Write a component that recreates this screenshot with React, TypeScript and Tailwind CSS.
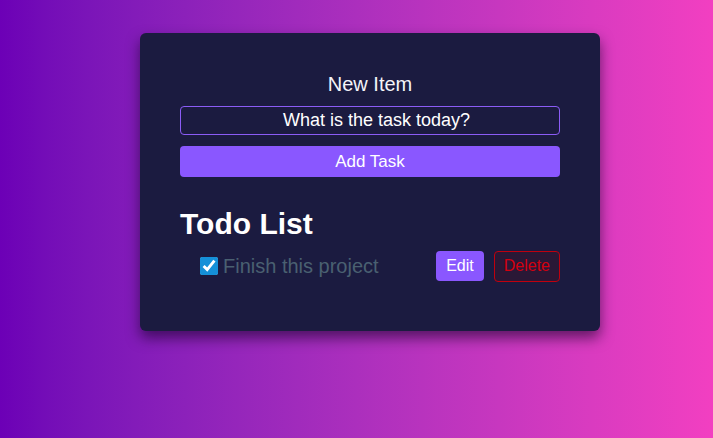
import { useState } from "react";

export default function App() {
  const [task, setTask] = useState("");
  const [done, setDone] = useState(true);

  return (
    <div className="min-h-screen w-full bg-gradient-to-r from-[#6c00b6] to-[#f23fc1] pt-[33px] font-['Liberation_Sans',Arial,sans-serif]">
      <div className="ml-[140px] w-[460px] rounded-md bg-[#1b1b40] px-10 pt-[37px] pb-[50px] shadow-[0_7px_14px_rgba(20,0,40,0.6)]">
        {/* New item form */}
        <h2 className="text-center text-xl leading-7 text-[#f4f4f8]">New Item</h2>
        <input
          value={task}
          onChange={(e) => setTask(e.target.value)}
          placeholder="What is the task today?"
          className="mt-2 block h-[29px] w-full rounded border border-[#8b5cf6] bg-transparent pl-[13px] text-center text-lg leading-6 text-white outline-none placeholder:text-white"
        />
        <button className="mt-[11px] block h-[31px] w-full rounded bg-[#8a57ff] text-[17px] text-white">
          Add Task
        </button>

        {/* List */}
        <h1 className="mt-[29px] text-[30px] font-bold leading-9 text-white">Todo List</h1>
        <div className="mt-[9px] flex h-[30px] items-center pl-5">
          <input
            type="checkbox"
            checked={done}
            onChange={() => setDone(!done)}
            className="h-[18px] w-[18px] accent-[#1590d8]"
          />
          <span className="ml-[5px] text-xl text-[#4a6071]">Finish this project</span>
          <div className="ml-auto flex gap-[10px]">
            <button className="h-[30px] rounded bg-[#8a57ff] px-[10px] text-base text-white">Edit</button>
            <button className="h-[31px] rounded border border-[#c0000e] bg-[#2a1836] px-[9px] text-base text-[#d4000f]">
              Delete
            </button>
          </div>
        </div>
      </div>
    </div>
  );
}
